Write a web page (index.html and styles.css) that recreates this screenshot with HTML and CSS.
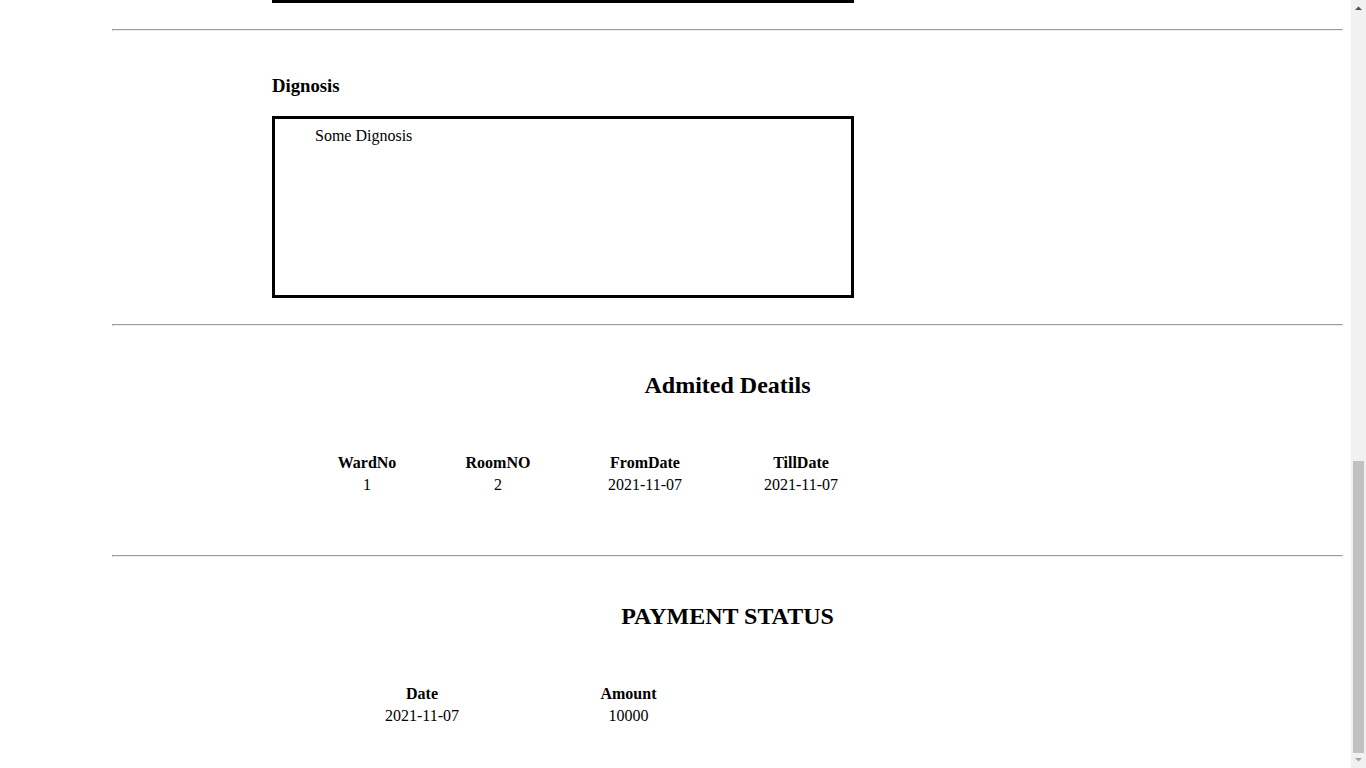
FILE: index.html
```html
<!DOCTYPE html>
<html lang="en">
<head>
<meta charset="utf-8">
<title>Patient Report</title>
<link rel="stylesheet" href="styles.css">
</head>
<body>
<main class="page">
  <div class="report">
    <div class="box-tail"></div>
    <hr class="divider">

    <section class="section">
      <h3 class="dx-title">Dignosis</h3>
      <div class="dx-box">Some Dignosis</div>
    </section>

    <hr class="divider">

    <section class="section">
      <h2 class="sec-title admit-title">Admited Deatils</h2>
      <table class="info-table admit-table">
        <thead>
          <tr><th class="c-ward">WardNo</th><th class="c-room">RoomNO</th><th class="c-date">FromDate</th><th class="c-date">TillDate</th></tr>
        </thead>
        <tbody>
          <tr><td>1</td><td>2</td><td>2021-11-07</td><td>2021-11-07</td></tr>
        </tbody>
      </table>
    </section>

    <hr class="divider">

    <section class="section">
      <h2 class="sec-title">PAYMENT STATUS</h2>
      <table class="info-table pay-table">
        <thead>
          <tr><th class="c-pdate">Date</th><th class="c-amount">Amount</th></tr>
        </thead>
        <tbody>
          <tr><td>2021-11-07</td><td>10000</td></tr>
        </tbody>
      </table>
    </section>
  </div>
</main>
<div class="scrollbar" aria-hidden="true">
  <div class="sb-button">
    <svg width="15" height="15" viewBox="0 0 15 15"><polygon points="4,10 11,10 7.5,6.5" fill="#505050"/></svg>
  </div>
  <div class="sb-track"></div>
  <div class="sb-thumb"></div>
  <div class="sb-button">
    <svg width="15" height="15" viewBox="0 0 15 15"><polygon points="4,5 11,5 7.5,8.5" fill="#a3a3a3"/></svg>
  </div>
</div>
</body>
</html>
```
FILE: styles.css
```css
html, body {
  height: 100%;
}

body {
  margin: 0;
  display: flex;
  overflow: hidden;
  font-family: "Liberation Serif", "Times New Roman", serif;
  font-size: 16px;
  color: #000;
  background: #fff;
}

.page {
  flex: 1;
  min-width: 0;
  padding: 0 8px 8px;
}

.report {
  margin-left: 104px;
}

.box-tail {
  margin-left: 160px;
  width: 582px;
  height: 3px;
  background: #000;
}

.divider {
  margin: 26px 0;
}

.section {
  display: flow-root;
}

.dx-title {
  font-size: 18.72px;
  font-weight: bold;
  margin: 18px 0 18.5px 160px;
}

.dx-box {
  box-sizing: border-box;
  margin-left: 160px;
  width: 582px;
  height: 182px;
  border: 3px solid #000;
  padding: 8px 40px;
}

.sec-title {
  font-size: 24px;
  font-weight: bold;
  text-align: center;
  margin: 19.92px 0;
}

.admit-title {
  margin-top: 20.92px;
}

.info-table {
  margin: 52px 0 32px 189px;
  border-collapse: separate;
  border-spacing: 8px 2px;
  table-layout: fixed;
}

.info-table th,
.info-table td {
  padding: 1px 0;
  text-align: center;
}

.info-table th {
  font-weight: bold;
}

.c-ward { width: 116px; }
.c-room { width: 130px; }
.c-date { width: 148px; }
.c-pdate { width: 226px; }
.c-amount { width: 171px; }

/* window scrollbar (page shown scrolled to its end) */
.scrollbar {
  flex: 0 0 15px;
  height: 100vh;
  display: flex;
  flex-direction: column;
  background: #f1f1f1;
}

.sb-button {
  height: 15px;
  flex: 0 0 15px;
}

.sb-button svg {
  display: block;
}

.sb-track {
  flex: 1;
}

.sb-thumb {
  flex: 0 0 292px;
  margin: 0 2px;
  background: #c1c1c1;
}
```
